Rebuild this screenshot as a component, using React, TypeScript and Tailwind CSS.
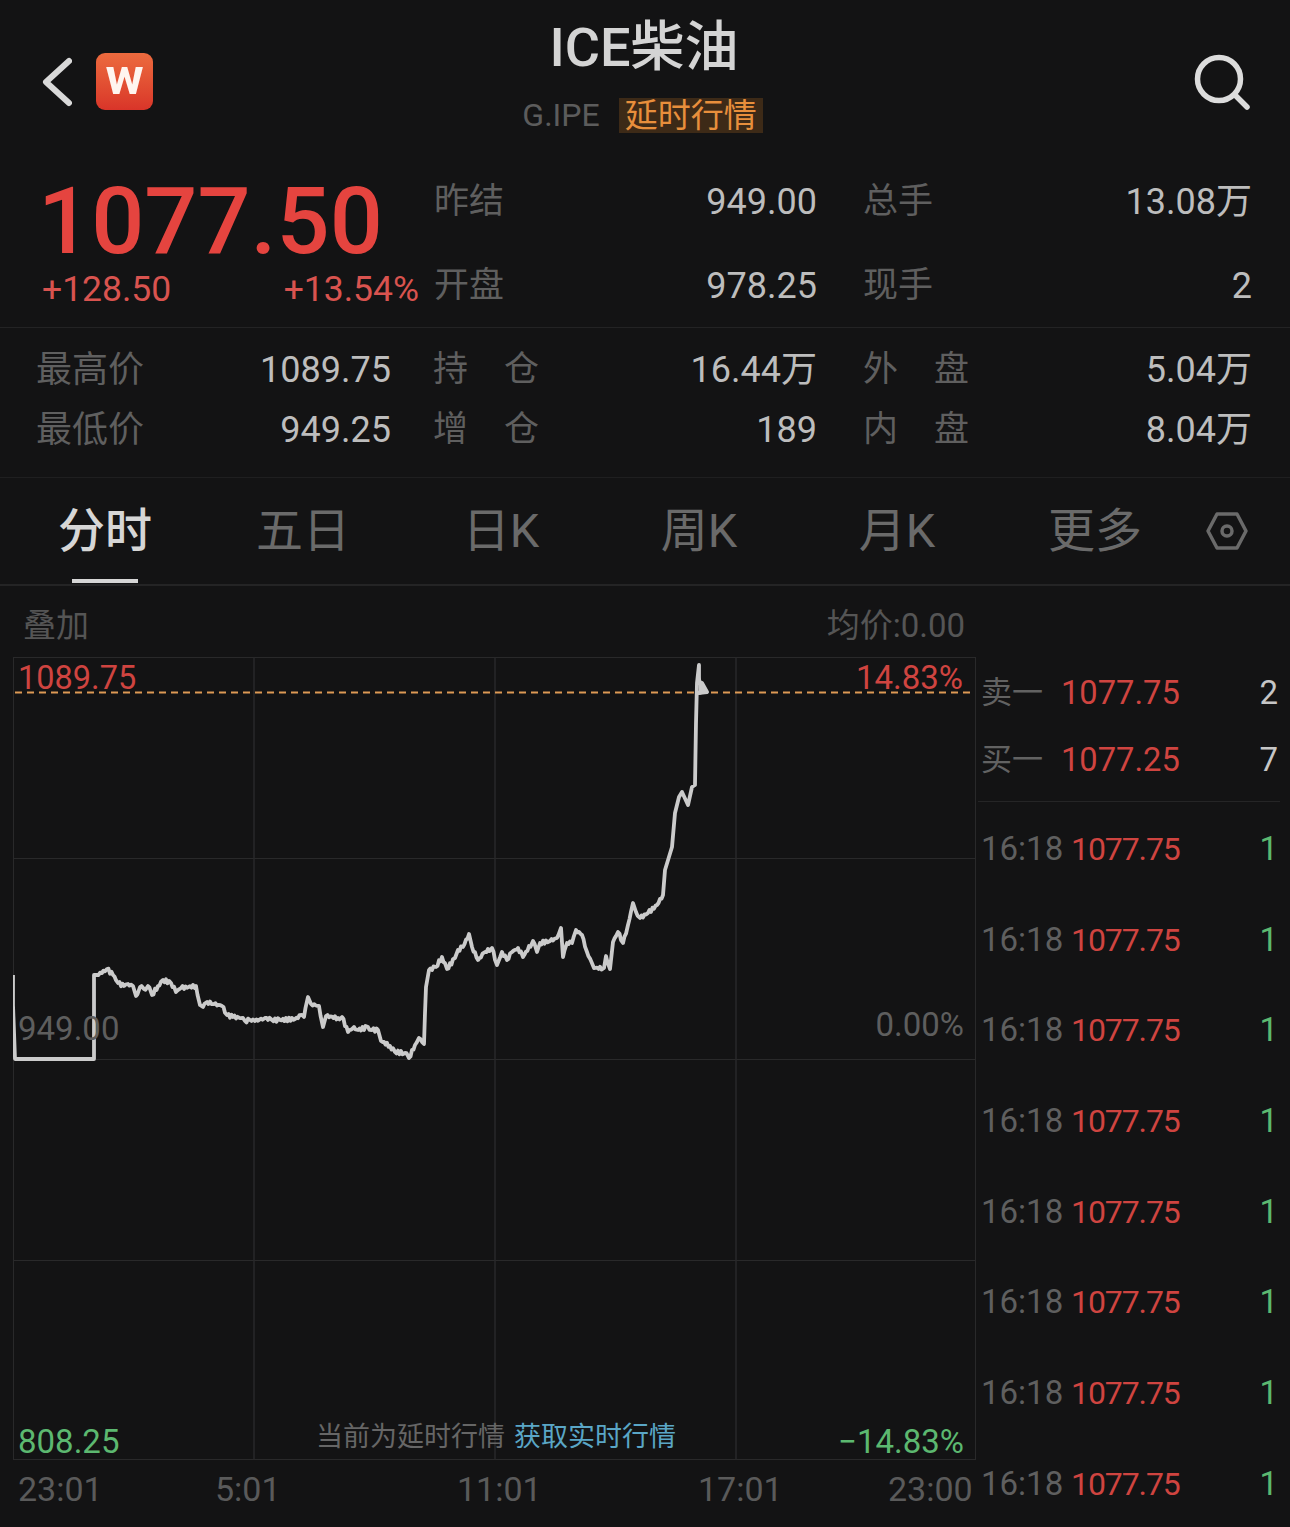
const LINE =
  "13,975 13,1005 15,1059 94,1059 94,975 97,975 102,973 107,969 113,975 118,983 124,986 128,984 133,986 136,996 140,987 144,989 148,986 152,995 158,986 163,980 171,983 176,992 181,988 196,986 200,1005 203,1007 207,1002 214,1004 222,1006 227,1015 233,1017 243,1018 245,1021 250,1020 255,1021 265,1018 272,1020 280,1020 295,1019 302,1015 304,1017 308,997 311,1004 319,1006 323,1027 326,1016 338,1018 342,1017 348,1032 354,1027 358,1030 368,1027 372,1030 378,1030 381,1041 390,1046 395,1052 405,1053 409,1058 415,1045 419,1038 424,1044 425,1013 426,987 429,970 436,967 442,957 447,969 455,958 458,950 463,947 469,934 472,947 478,960 485,952 492,948 497,965 502,952 507,960 512,952 518,948 523,957 533,941 537,952 540,943 550,941 557,938 561,928 563,957 567,943 572,943 576,930 582,935 587,952 594,968 604,968 606,956 610,969 613,942 618,932 623,943 628,925 633,903 636,912 640,918 648,913 657,905 663,895 665,870 672,847 675,813 679,797 682,792 688,805 692,787 695,785 696,723 697,683 699,665 699,683 702,683 707,692 698,693";

// 分时线抖动：长的平缓段补点，看起来像逐笔数据
function roughen(line: string) {
  const pts = line.split(" ").map((p) => p.split(",").map(Number));
  const out: string[] = [];
  pts.forEach(([x, y], i) => {
    out.push(`${x},${y}`);
    const next = pts[i + 1];
    if (!next || x < 95 || x > 660 || next[0] - x < 4) return;
    for (let nx = x + 1.5; nx < next[0] - 1; nx += 1.5) {
      const t = (nx - x) / (next[0] - x);
      const ny = y + (next[1] - y) * t + Math.sin(nx * 2.3) * 1.8;
      out.push(`${nx},${ny.toFixed(1)}`);
    }
  });
  return out.join(" ");
}

const topStats = [
  ["昨结", "949.00", "总手", "13.08万"],
  ["开盘", "978.25", "现手", "2"],
];
const moreStats = [
  ["最高价", "1089.75", "持", "仓", "16.44万", "外", "盘", "5.04万"],
  ["最低价", "949.25", "增", "仓", "189", "内", "盘", "8.04万"],
];
const tabs = ["分时", "五日", "日K", "周K", "月K", "更多"];
const ticks = Array.from({ length: 8 });

function SpreadLabel({ a, b }: { a: string; b: string }) {
  return (
    <span className="flex w-[106px] justify-between text-[#5f5f5f]">
      <span>{a}</span>
      <span>{b}</span>
    </span>
  );
}

export default function App() {
  return (
    <div className="h-[1527px] w-[1290px] overflow-hidden bg-[#131314] [font-family:Roboto,'Noto_Sans_CJK_SC',sans-serif]">
      {/* 顶部 */}
      <header className="relative flex h-[160px] items-start justify-between pl-[42px] pr-[38px] pt-[52px]">
        <div className="flex items-center gap-[24px]">
          <svg width="30" height="58" viewBox="0 0 30 58" fill="none">
            <path d="M27 9 L4 30 L27 51" stroke="#d9d9d9" strokeWidth="6" strokeLinecap="round" strokeLinejoin="round" />
          </svg>
          <div className="flex h-[57px] w-[57px] items-center justify-center rounded-[9px] bg-gradient-to-b from-[#ec6a3e] to-[#d93429] text-[52px] font-bold leading-none text-[#fff5ef]">
            <span className="-mt-[9px]">w</span>
          </div>
        </div>
        <div className="absolute left-0 right-0 top-[17px] flex flex-col items-center">
          <div className="ml-[-2px] text-[54px] font-medium leading-[62px] text-[#d4d4d4]">ICE柴油</div>
          <div className="mt-[18px] flex items-center gap-[19px] pr-[5px]">
            <span className="text-[32px] leading-[36px] text-[#5c5c5c]">G.IPE</span>
            <span className="bg-[#3d2a17] px-[6px] text-[33px] leading-[35px] text-[#e88f3c]">延时行情</span>
          </div>
        </div>
        <svg className="ml-[2px]" width="60" height="60" viewBox="0 0 60 60" fill="none">
          <circle cx="27" cy="27" r="21.5" stroke="#dcdcdc" strokeWidth="5.5" />
          <path d="M43 43 L55 55" stroke="#dcdcdc" strokeWidth="5.5" strokeLinecap="round" />
        </svg>
      </header>

      {/* 报价 */}
      <section className="flex h-[168px] border-b border-[#232324]">
        <div className="w-[434px] pl-[42px] pr-[15px] text-[#e5443f]">
          <div className="-ml-[4px] mt-[15px] text-[93.5px] font-medium leading-[92px]">1077.50</div>
          <div className="mt-[2px] flex justify-between text-[35.5px] leading-[40px] text-[#d9534f]">
            <span>+128.50</span>
            <span>+13.54%</span>
          </div>
        </div>
        <div className="flex flex-1 flex-col gap-[44px] pt-[22px] text-[36px] leading-[40px]">
          {topStats.map((row) => (
            <div key={row[0]} className="flex">
              <span className="w-[129px] text-[35px] text-[#5f5f5f]">{row[0]}</span>
              <span className="w-[254px] text-right text-[#bdbdbd]">{row[1]}</span>
              <span className="ml-[46px] w-[130px] text-[35px] text-[#5f5f5f]">{row[2]}</span>
              <span className="w-[259px] text-right text-[#bdbdbd]">{row[3]}</span>
            </div>
          ))}
        </div>
      </section>

      <section className="flex h-[150px] flex-col gap-[20px] border-b border-[#1f1f20] pt-[22px] text-[36px] leading-[40px]">
        {moreStats.map((row) => (
          <div key={row[0]} className="flex">
            <span className="ml-[36px] w-[201px] text-[#5f5f5f]">{row[0]}</span>
            <span className="w-[154px] text-right text-[#bdbdbd]">{row[1]}</span>
            <span className="ml-[42px] text-[35px]"><SpreadLabel a={row[2]} b={row[3]} /></span>
            <span className="w-[278px] text-right text-[#bdbdbd]">{row[4]}</span>
            <span className="ml-[46px] text-[35px]"><SpreadLabel a={row[5]} b={row[6]} /></span>
            <span className="w-[283px] text-right text-[#bdbdbd]">{row[7]}</span>
          </div>
        ))}
      </section>

      {/* 周期切换 */}
      <nav className="flex h-[108px] items-center border-b-2 border-[#242425] pl-[6px]">
        {tabs.map((t, i) => (
          <div
            key={t}
            className={`relative flex h-full w-[198px] items-center justify-center text-[47px] ${i === 0 ? "font-medium text-[#d6d6d6]" : "text-[#6a6a6a]"}`}
          >
            {t}
            {i === 0 && <span className="absolute bottom-[1px] left-[66px] h-[4px] w-[66px] bg-[#d6d6d6]" />}
          </div>
        ))}
        <svg className="ml-[12px]" width="42" height="38" viewBox="0 0 42 38" fill="none">
          <path d="M11 2 H31 L40 19 L31 36 H11 L2 19 Z" stroke="#6a6a6a" strokeWidth="3.5" strokeLinejoin="round" />
          <circle cx="21" cy="19" r="5" stroke="#6a6a6a" strokeWidth="3.5" />
        </svg>
      </nav>

      <div className="flex h-[71px] w-[965px] items-center justify-between pl-[23px] pt-[8px] text-[33px] text-[#555555]">
        <span>叠加</span>
        <span>均价:0.00</span>
      </div>

      <div className="flex">
        {/* 分时图 */}
        <div className="ml-[13px] w-[964px]">
          <div className="relative h-[804px]">
            <svg className="absolute left-0 top-0" width="964" height="804" viewBox="13 657 964 804" fill="none">
              <rect x="13.5" y="657.5" width="962" height="802" stroke="#29292a" />
              {[858.5, 1059.5, 1260.5].map((y) => (
                <path key={y} d={`M13 ${y} H976`} stroke="#29292a" />
              ))}
              {[254, 495, 736].map((x) => (
                <path key={x} d={`M${x} 657 V1460`} stroke="#29292a" strokeWidth="1.5" />
              ))}
              <path d="M15 692.5 H970" stroke="#dd9a55" strokeWidth="2" strokeDasharray="7 5" />
              <polyline points={roughen(LINE)} stroke="#cbcbcb" strokeWidth="3.8" strokeLinejoin="round" />
              <path d="M698 672 L699 695 L708 692 L702 682 Z" fill="#cbcbcb" />
            </svg>
            <span className="absolute left-[5px] top-[0px] text-[32.5px] leading-[42px] text-[#cf4440]">1089.75</span>
            <span className="absolute right-[14px] top-[0px] text-[33px] leading-[42px] text-[#cf4440]">14.83%</span>
            <span className="absolute left-[5px] top-[351px] text-[33px] leading-[42px] text-[#5e5e5e]">949.00</span>
            <span className="absolute right-[13px] top-[347px] text-[33px] leading-[42px] text-[#5e5e5e]">0.00%</span>
            <span className="absolute left-[5px] top-[764px] text-[33px] leading-[42px] text-[#5cb870]">808.25</span>
            <span className="absolute right-[13px] top-[764px] text-[33px] leading-[42px] text-[#5cb870]">−14.83%</span>
            <span className="absolute left-[303px] top-[761px] text-[27px] leading-[38px] text-[#666666]">当前为延时行情</span>
            <span className="absolute left-[501px] top-[761px] text-[27px] leading-[38px] text-[#5aa6c6]">获取实时行情</span>
          </div>
          <div className="flex h-[56px] items-center text-[34px] text-[#5a5a5a]">
            <span className="ml-[5px] w-[197px]">23:01</span>
            <span className="w-[242px]">5:01</span>
            <span className="w-[241px]">11:01</span>
            <span className="w-[190px]">17:01</span>
            <span>23:00</span>
          </div>
        </div>

        {/* 盘口 + 逐笔 */}
        <aside className="ml-[1px] flex-1 pl-[3px] pr-[12px] text-[33px] leading-[42px]">
          <div className="-ml-[3px] -mt-[2px] mr-[-2px] flex h-[147px] flex-col gap-[25px] border-b border-[#252526] pl-[3px] pt-[17px]">
            {[
              ["卖一", "1077.75", "2"],
              ["买一", "1077.25", "7"],
            ].map((r) => (
              <div key={r[0]} className="flex pr-[2px]">
                <span className="w-[80px] text-[31px] text-[#626262]">{r[0]}</span>
                <span className="w-[118px] text-[32.7px] text-[#cf4440]">{r[1]}</span>
                <span className="flex-1 text-right text-[#c6c6c6]">{r[2]}</span>
              </div>
            ))}
          </div>
          <div className="flex flex-col gap-[48.7px] pt-[26px]">
            {ticks.map((_, i) => (
              <div key={i} className="flex items-center">
                <span className="w-[90px] text-[#5f5f5f]">16:18</span>
                <span className="w-[108px] text-[32px] tracking-[-1.1px] text-[#cf4440]">1077.75</span>
                <span className="flex-1 text-right text-[#5cb870]">1</span>
              </div>
            ))}
          </div>
        </aside>
      </div>
    </div>
  );
}
